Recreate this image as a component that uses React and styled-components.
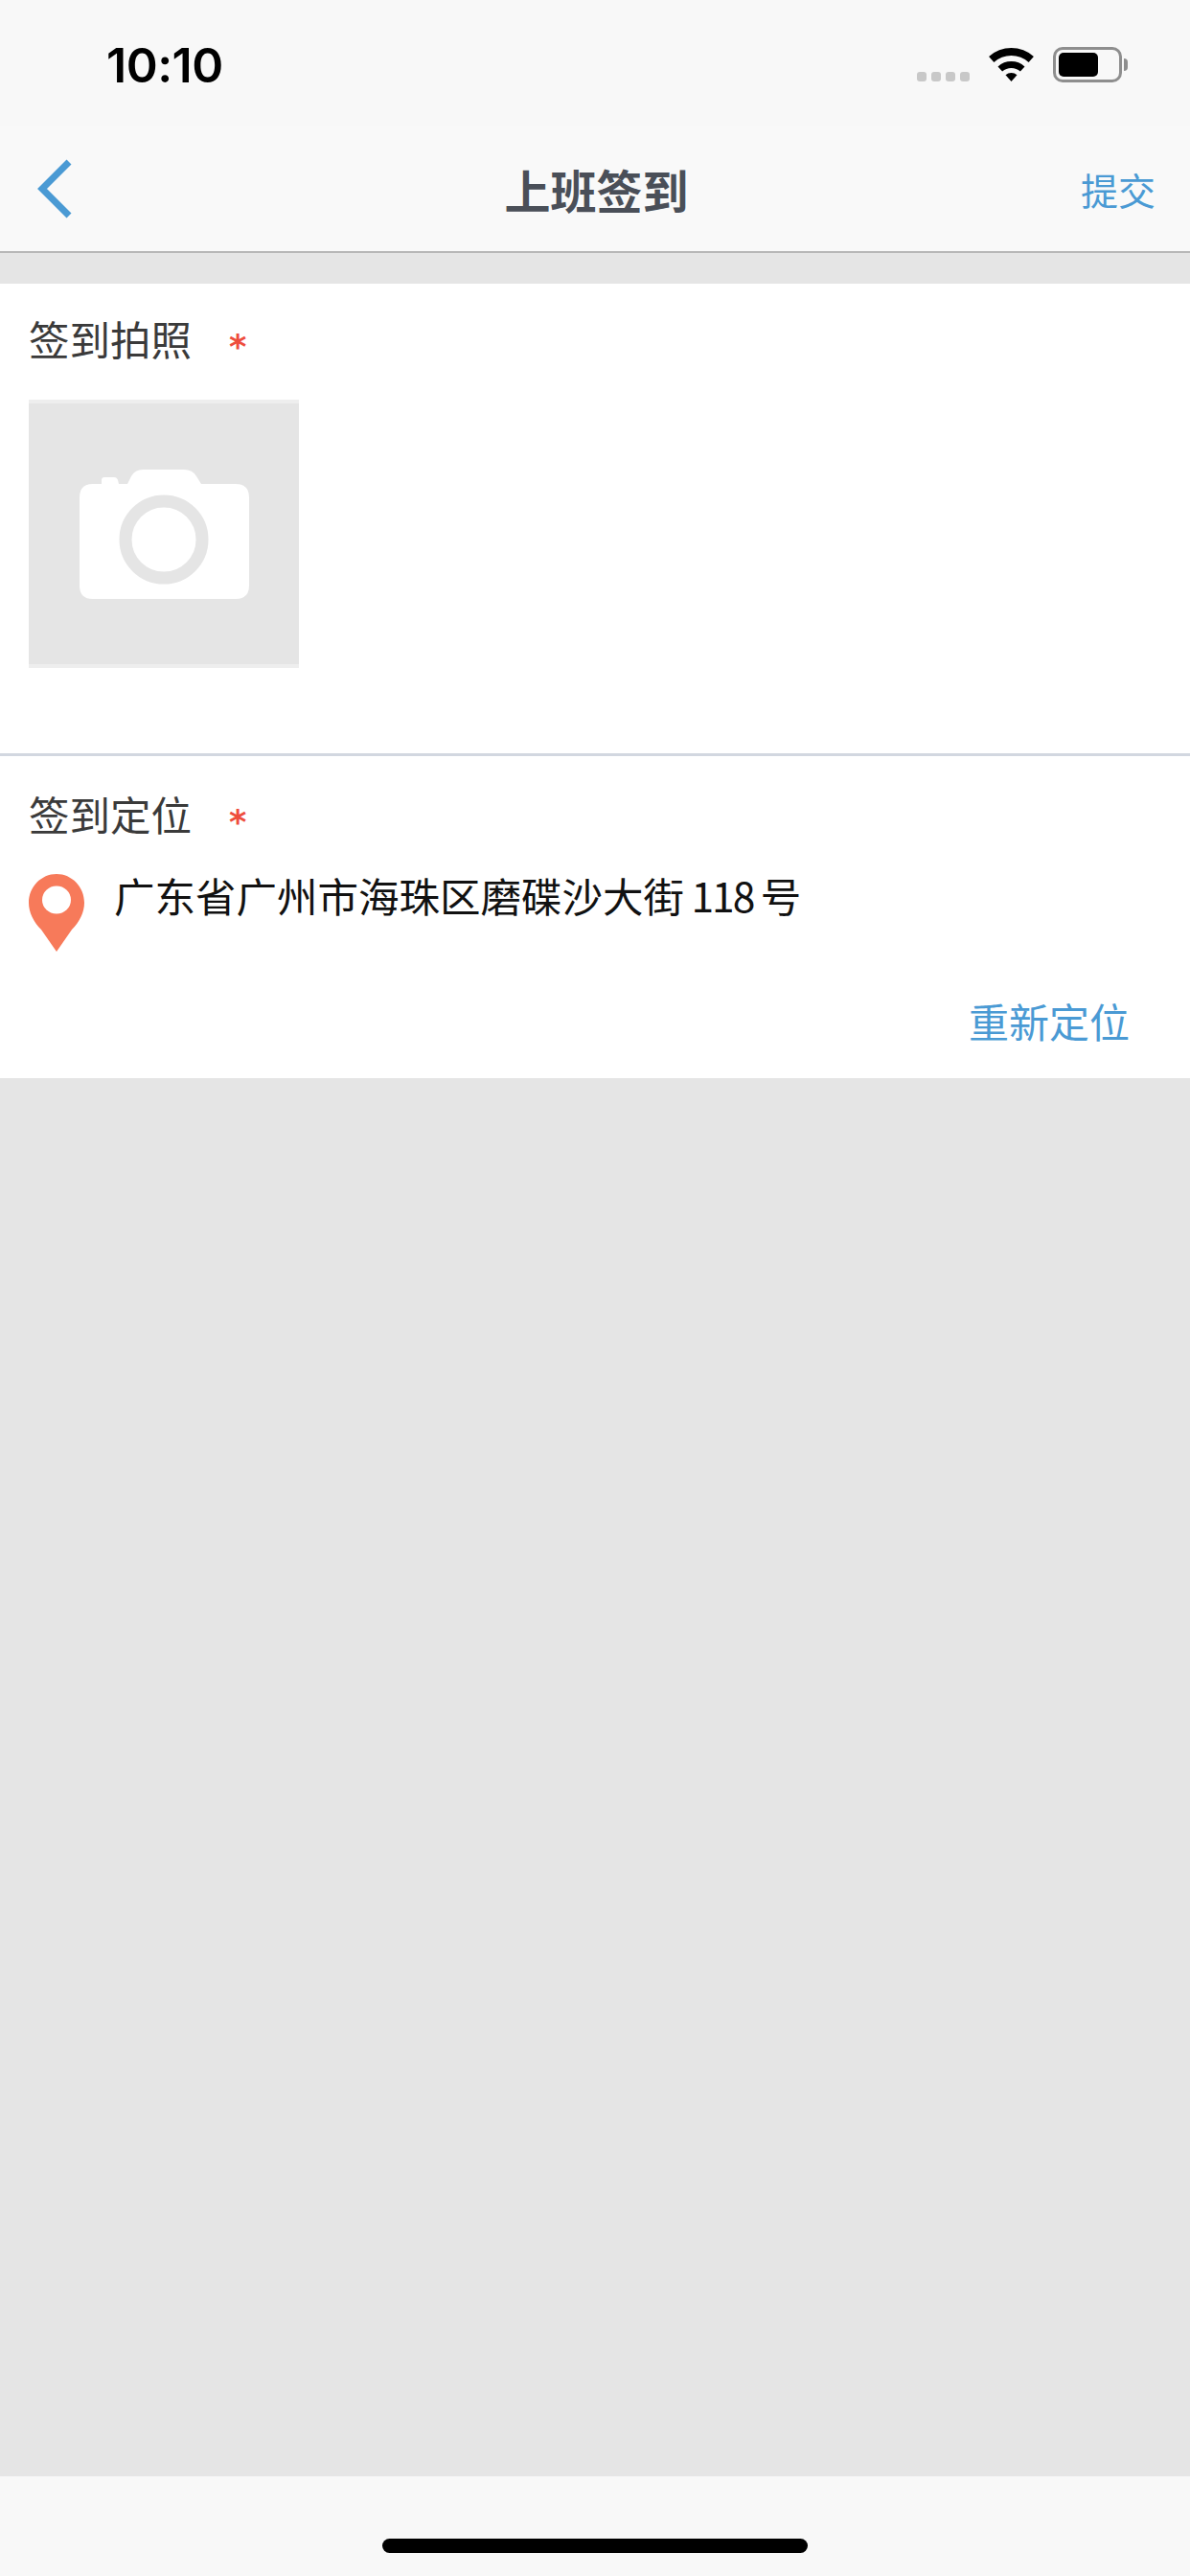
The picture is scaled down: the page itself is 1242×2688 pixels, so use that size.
import React from 'react'
import styled, { createGlobalStyle } from 'styled-components'

const cjk = '"Noto Sans CJK SC", "Noto Sans", sans-serif'

const GlobalStyle = createGlobalStyle`
  html, body {
    margin: 0;
    padding: 0;
    background: #e5e5e5;
  }
  * {
    box-sizing: border-box;
  }
`
const Page = styled.div`
  width: 1242px;
  height: 2688px;
  display: flex;
  flex-direction: column;
  background: #e5e5e5;
  font-family: ${cjk};
`
const StatusBar = styled.div`
  height: 132px;
  padding: 49px 71px 0 111px;
  display: flex;
  justify-content: space-between;
  align-items: flex-start;
  background: #f8f8f8;
`
const Time = styled.div`
  font-family: Inter, "Liberation Sans", sans-serif;
  font-size: 50px;
  line-height: 38px;
  font-weight: 600;
  letter-spacing: -0.5px;
  color: #000;
`
const StatusIcons = styled.div`
  display: flex;
  align-items: flex-start;
`
const SignalDots = styled.div`
  display: flex;
  gap: 5px;
  margin: 26px 20px 0 0;
`
const SignalDot = styled.span`
  width: 10px;
  height: 10px;
  border-radius: 3px;
  background: #c8c8c8;
`
const Battery = styled.div`
  width: 72px;
  height: 37px;
  margin-left: 20px;
  padding: 3px;
  position: relative;
  border: 3px solid #8e8e8e;
  border-radius: 10px;
  &::after {
    content: '';
    position: absolute;
    left: 71px;
    top: 9px;
    width: 4px;
    height: 13px;
    border-radius: 0 4px 4px 0;
    background: #8e8e8e;
  }
`
const BatteryFill = styled.div`
  height: 100%;
  border-radius: 5px;
  background: #000;
`
const NavBar = styled.div`
  height: 132px;
  padding: 0 36px 0 39px;
  display: grid;
  grid-template-columns: 1fr auto 1fr;
  align-items: center;
  background: #f9f9f9;
  border-bottom: 2px solid #b7b7b7;
`
const BackIcon = styled.svg`
  display: block;
  width: 36px;
  height: 62px;
  color: #4a9ad4;
`
const NavTitle = styled.div`
  font-size: 48px;
  line-height: 60px;
  font-weight: 700;
  color: #4a4f58;
`
const NavAction = styled.div`
  justify-self: end;
  font-size: 39px;
  line-height: 50px;
  color: #4a9ad4;
`
const Card = styled.div`
  background: #fff;
  margin-top: ${(p) => (p.$first ? '32px' : '0')};
  padding: ${(p) => p.$padding};
  border-bottom: ${(p) => (p.$divider ? '3px solid #d2d7e0' : 'none')};
`
const SectionHead = styled.div`
  display: flex;
  align-items: center;
  padding-left: 30px;
  font-size: 42.5px;
  line-height: 42px;
  color: #3a3a3a;
`
const Required = styled.span`
  align-self: flex-start;
  margin: 15px 0 0 39px;
  font-family: "DejaVu Sans", sans-serif;
  font-size: 35px;
  font-weight: 700;
  line-height: 30px;
  height: 27px;
  color: #ee4d3d;
`
const PhotoSlot = styled.div`
  width: 282px;
  height: 280px;
  margin: 43px 0 0 30px;
  display: flex;
  align-items: center;
  justify-content: center;
  background: #e5e5e5;
  border-top: 4px solid #eeeeee;
  border-bottom: 4px solid #eeeeee;
`
const AddressRow = styled.div`
  display: flex;
  align-items: flex-start;
  margin-top: 42px;
  padding-left: 30px;
`
const PinIcon = styled.svg`
  display: block;
  flex: none;
  width: 58px;
  height: 81px;
`
const Address = styled.div`
  margin: 1px 0 0 31px;
  font-size: 42.5px;
  line-height: 42px;
  word-spacing: -2px;
  color: #111;
`
const Digits = styled.span`
  letter-spacing: -2px;
`
const RelocateRow = styled.div`
  display: flex;
  justify-content: flex-end;
  margin-top: 51px;
  padding-right: 63px;
`
const Relocate = styled.div`
  font-size: 42px;
  line-height: 42px;
  color: #4a9ad4;
`
const Filler = styled.div`
  flex: 1;
  background: #e5e5e5;
`
const HomeBar = styled.div`
  height: 104px;
  padding-top: 65px;
  display: flex;
  justify-content: center;
  background: #f8f8f8;
`
const HomeIndicator = styled.div`
  width: 444px;
  height: 15px;
  border-radius: 8px;
  background: #000;
`

const WifiIcon = () => (
  <svg width="47" height="36" viewBox="0 0 47 36">
    <path d="M0.1 10A35 35 0 0 1 46.9 10L41.6 16A27 27 0 0 0 5.4 16Z" fill="#000" />
    <path d="M9.5 20.4A21 21 0 0 1 37.5 20.4L32.9 25.6A14 14 0 0 0 14.1 25.6Z" fill="#000" />
    <path d="M17.5 29.3A9 9 0 0 1 29.5 29.3L23.5 36Z" fill="#000" />
  </svg>
)

const CameraIcon = () => (
  <svg width="177" height="135" viewBox="0 0 177 135">
    <path
      d="M14 15H23V11Q23 8 26 8H36Q39 8 40 11L41 15H50L54 7Q58 0 66 0H109Q118 0 122 7L127 15H163Q177 15 177 29V121Q177 135 163 135H14Q0 135 0 121V29Q0 15 14 15Z"
      fill="#fff"
    />
    <circle cx="88" cy="73" r="40" fill="none" stroke="#e5e5e5" strokeWidth="13" />
  </svg>
)

const App = () => (
  <Page>
    <GlobalStyle />
    <StatusBar>
      <Time>10:10</Time>
      <StatusIcons>
        <SignalDots>
          {[0, 1, 2, 3].map((i) => (
            <SignalDot key={i} />
          ))}
        </SignalDots>
        <WifiIcon />
        <Battery>
          <BatteryFill style={{ width: '68%' }} />
        </Battery>
      </StatusIcons>
    </StatusBar>
    <NavBar>
      <BackIcon viewBox="0 0 36 62" fill="none">
        <path d="M33 3L5 31L33 59" stroke="currentColor" strokeWidth="7" />
      </BackIcon>
      <NavTitle>上班签到</NavTitle>
      <NavAction>提交</NavAction>
    </NavBar>
    <Card $first $divider $padding="36px 0 89px">
      <SectionHead>
        签到拍照
        <Required>*</Required>
      </SectionHead>
      <PhotoSlot>
        <CameraIcon />
      </PhotoSlot>
    </Card>
    <Card $padding="39px 0 39px">
      <SectionHead>
        签到定位
        <Required>*</Required>
      </SectionHead>
      <AddressRow>
        <PinIcon viewBox="0 0 58 81">
          <path
            d="M29 0C13 0 0 13.5 0 30C0 40 5 50 13 58L29 81L45 58C53 50 58 40 58 30C58 13.5 45 0 29 0Z"
            fill="#f77a5a"
          />
          <ellipse cx="29" cy="27" rx="15" ry="14.5" fill="#fff" />
        </PinIcon>
        <Address>
          广东省广州市海珠区磨碟沙大街 <Digits>118</Digits> 号
        </Address>
      </AddressRow>
      <RelocateRow>
        <Relocate>重新定位</Relocate>
      </RelocateRow>
    </Card>
    <Filler />
    <HomeBar>
      <HomeIndicator />
    </HomeBar>
  </Page>
)

export default App
